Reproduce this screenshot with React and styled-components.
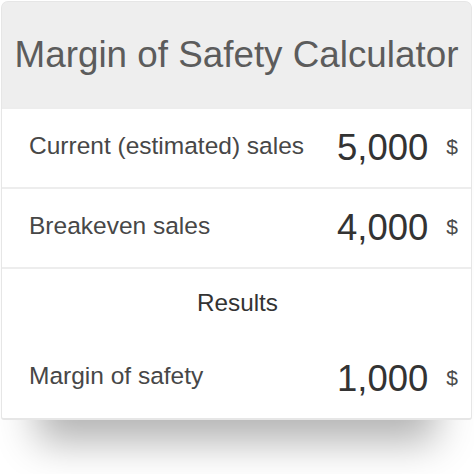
import React from "react";
import styled, { createGlobalStyle } from "styled-components";

const GlobalStyle = createGlobalStyle`
    body {
        margin: 0;
        background: #ffffff;
        font-family: "Liberation Sans", Arial, sans-serif;
    }
`;

const Page = styled.div`
    width: 474px;
    height: 474px;
    padding: 1px 2px 0 1px;
    box-sizing: border-box;
    overflow: hidden;
`;

const Card = styled.div`
    display: flex;
    flex-direction: column;
    gap: 2px;
    background: #ededed;
    border: 1px solid #e6e6e6;
    border-bottom-width: 2px;
    border-radius: 7px 7px 3px 3px;
    overflow: hidden;
    box-shadow: 0 58px 38px -36px rgba(0, 0, 0, 0.3);
`;

const Header = styled.h1`
    margin: 0;
    height: 105px;
    display: flex;
    align-items: center;
    justify-content: center;
    background: #eeeeee;
    color: #5c5c5c;
    font-size: 36.8px;
    font-weight: normal;
    padding-top: 1px;
    box-sizing: border-box;
`;

const Section = styled.div`
    display: flex;
    flex-direction: column;
    background: #ffffff;
`;

const Row = styled.div`
    display: flex;
    align-items: center;
    height: ${props => props.height || 78}px;
    padding: 0 13px 0 27px;
`;

const Label = styled.span`
    flex: 1;
    font-size: 24.5px;
    color: #474747;
    margin-bottom: 5px;
`;

const Value = styled.span`
    font-size: 36.5px;
    color: #333333;
    margin-right: 18px;
`;

const Unit = styled.span`
    font-size: 21px;
    color: #4a4a4a;
    margin-bottom: 2px;
`;

const Title = styled.div`
    text-align: center;
    font-size: 24.3px;
    color: #333333;
    padding: 20px 0 22px 0;
    margin-left: 2px;
`;

const Field = ({ label, value, height }) => (
    <Row height={height}>
        <Label>{label}</Label>
        <Value>{value}</Value>
        <Unit>$</Unit>
    </Row>
);

const App = () => {
    return (
        <Page>
            <GlobalStyle />
            <Card>
                <Header>Margin of Safety Calculator</Header>
                <Section>
                    <Field label="Current (estimated) sales" value="5,000" />
                </Section>
                <Section>
                    <Field label="Breakeven sales" value="4,000" />
                </Section>
                <Section>
                    <Title>Results</Title>
                    <Field label="Margin of safety" value="1,000" height={79} />
                </Section>
            </Card>
        </Page>
    );
};

export default App;
